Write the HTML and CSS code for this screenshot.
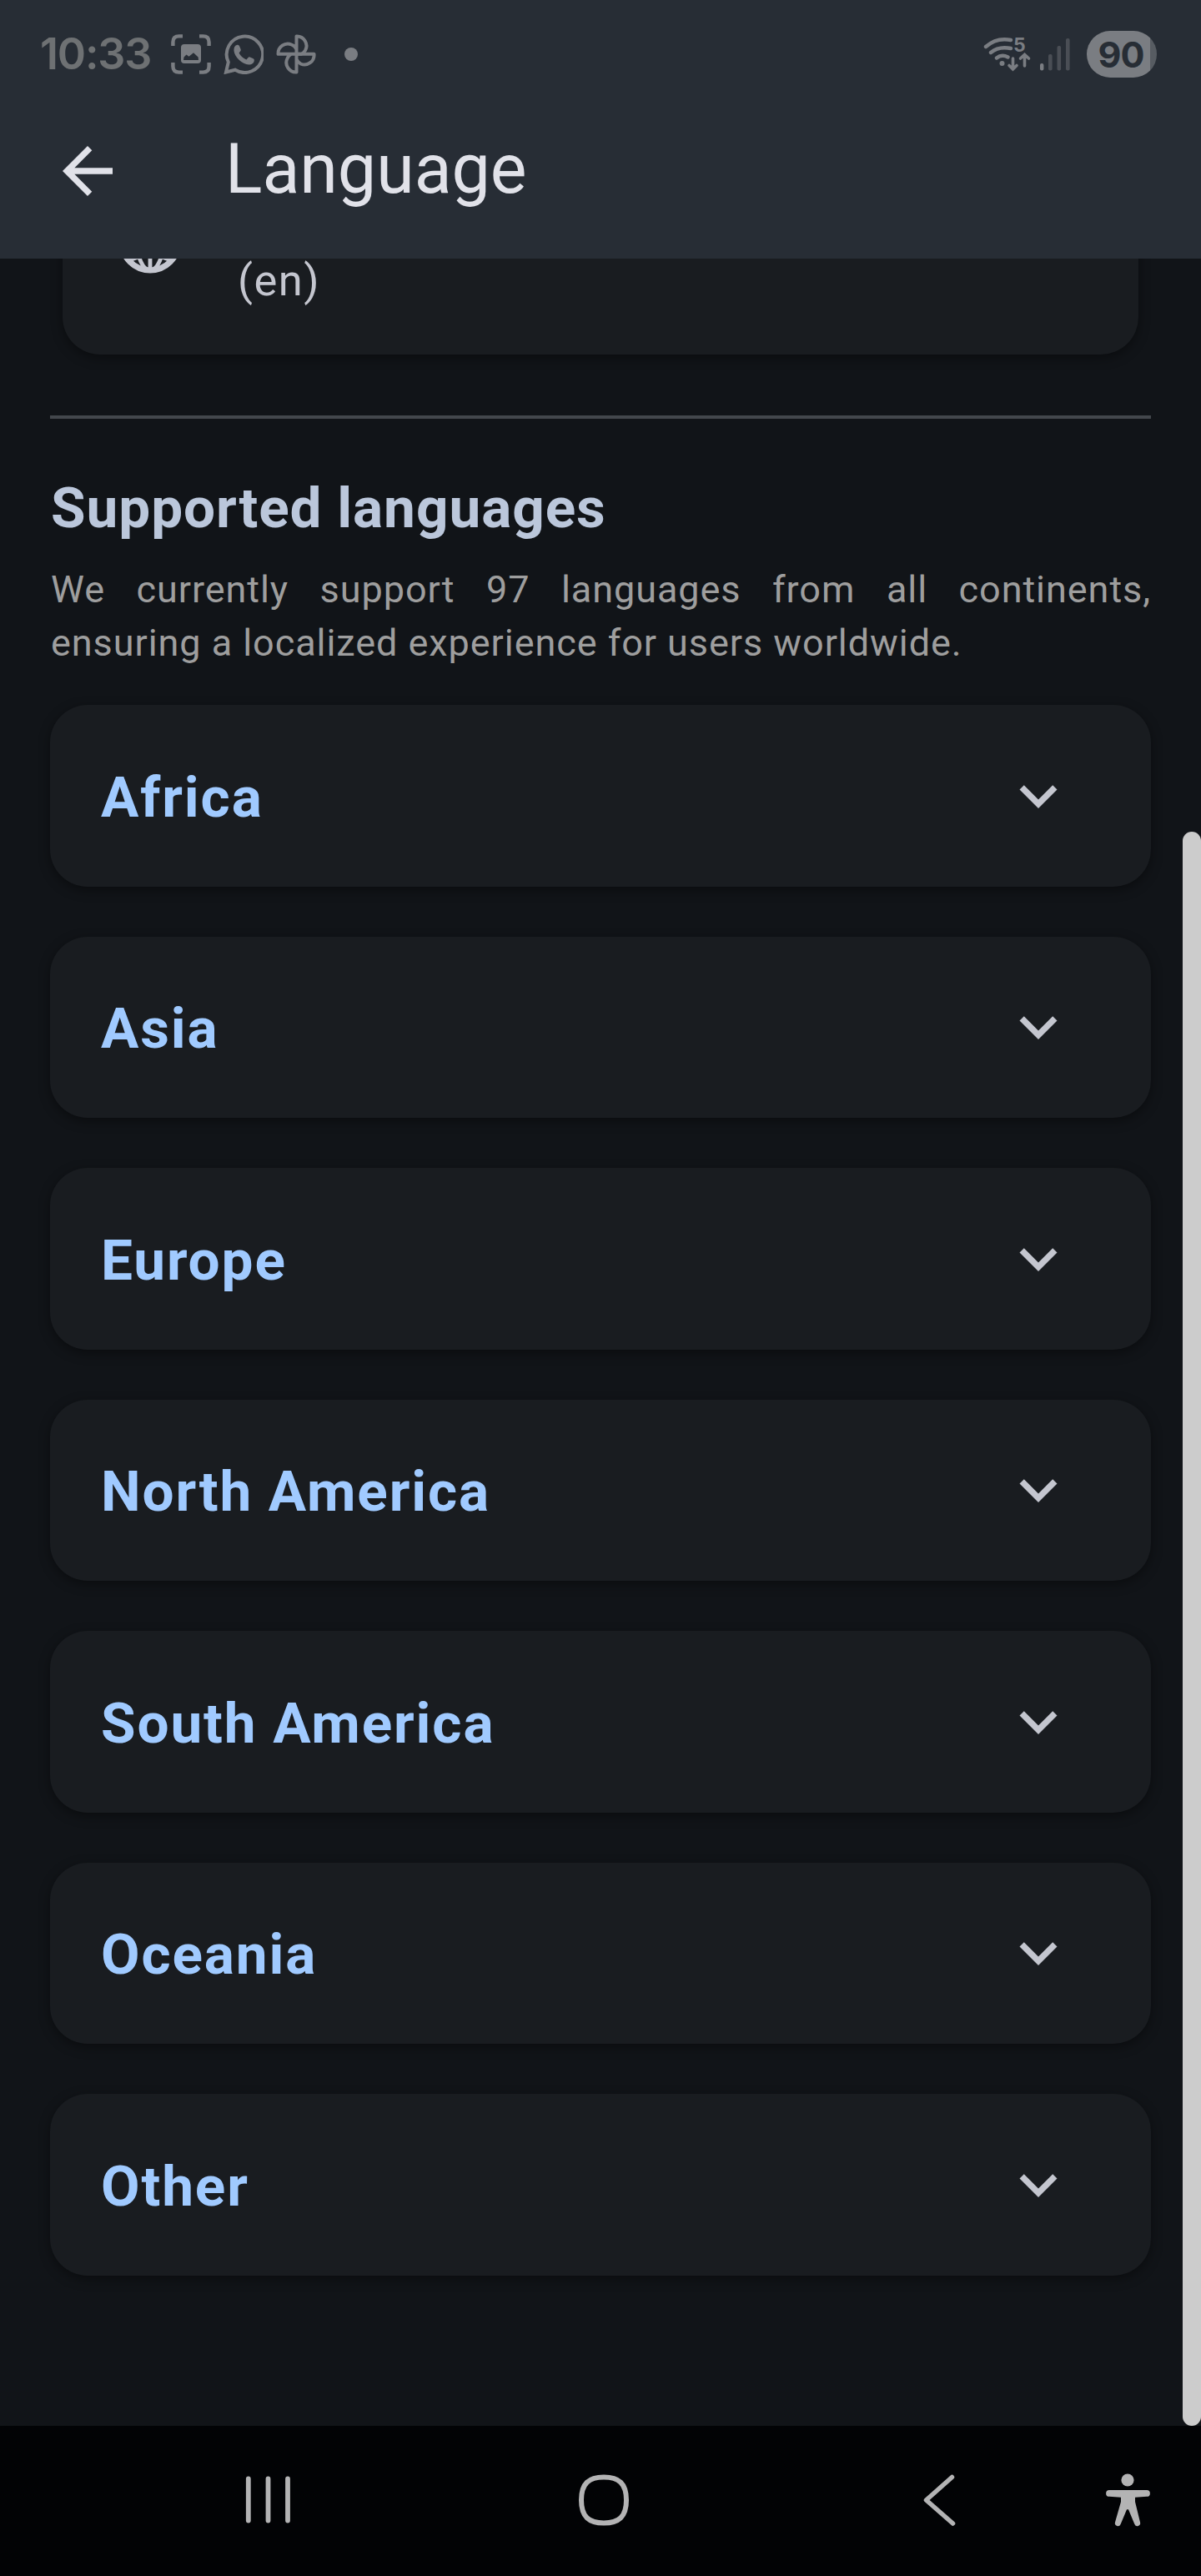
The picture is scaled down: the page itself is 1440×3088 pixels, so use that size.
FILE: index.html
```html
<!DOCTYPE html>
<html lang="en">
<head>
<meta charset="utf-8">
<title>Language</title>
<link rel="stylesheet" href="styles.css">
</head>
<body>
<div class="screen">
  <header class="top">
    <div class="status">
      <span class="clock">10:33</span>
      <div class="notifications">
        <svg width="48" height="48" viewBox="0 0 48 48" fill="none" stroke="currentColor" stroke-width="4.4" stroke-linecap="butt">
          <path d="M2.400 14V9.500Q2.400 2.400 9.500 2.400H14M34 2.400h4.500Q45.600 2.400 45.600 9.500V14M45.600 34v4.500Q45.600 45.600 38.500 45.600H34M14 45.600H9.500Q2.400 45.600 2.400 38.500V34"/>
          <path fill="currentColor" stroke="none" fill-rule="evenodd" d="M16 12h16q4 0 4 4v15q0 4-4 4H16q-4 0-4-4V16q0-4 4-4zM15 31h18l-.4-3.500-5.600-5.300-5.500 4.600-3-2.300-3 3z"/>
        </svg>
        <svg width="48" height="48" viewBox="0 0 48 48" fill="none" stroke="currentColor" stroke-width="4">
          <path d="M3 45.500L5.800 33.500A21.700 21.700 0 1 1 14 42.700z"/>
          <path fill="currentColor" stroke="none" d="M13 15.500q1.500-3 4-2.700 1.600.1 2.200 1.700l1.500 3.800q.4 1.200-.6 2.300l-1.500 1.800q2.800 5.500 8.800 8l2.200-2.500q.9-1 2.100-.5l4 1.900q1.500.8 1.100 2.600-1 4.300-6.300 4.600c-8.500-.3-17.300-9.700-18-16.500q-.1-2.500.5-4.500z"/>
        </svg>
        <svg width="48" height="48" viewBox="0 0 48 48" fill="none" stroke="currentColor" stroke-width="4" stroke-linejoin="round">
          <path d="M24.500 23.800V2.500A11.500 11.500 0 0 1 35 19.500Q33 22.600 30 23.800H2.500A11.500 11.500 0 0 1 18.500 12.500Q22.500 14 24.500 18z"/>
          <path d="M24.500 22V45.500A11.500 11.500 0 0 1 13.500 29Q15 25.500 18 23.800M24.500 23.800H45.500A11.500 11.500 0 0 1 29.500 35.500Q26 33.500 24.500 30"/>
        </svg>
        <span class="more-dot"></span>
      </div>
      <div class="system">
        <svg width="58" height="64" viewBox="0 -10 58 64" fill="none" stroke="currentColor" stroke-width="4.400" stroke-linecap="round">
          <path d="M3 13Q16 1.500 33 5M9 20q9.500-8 24-5M16 26.500q6-5 13.500-1"/>
          <circle cx="22.500" cy="33" r="3" fill="currentColor" stroke="none"/>
          <path stroke-width="3.600" d="M35.500 27v12.500M31 35.500l4.500 4.500 4.500-4.500M49.500 36V23M44.500 27l5-4.500 5 4.500"/>
          <text class="wifi-band" x="36" y="19">5</text>
        </svg>
        <svg width="38" height="40" viewBox="0 0 38 40" fill="currentColor">
          <rect x="1" y="31" width="4.400" height="8.500" rx="2"/>
          <g opacity=".42"><rect x="11" y="20" width="4.600" height="19.500" rx="2"/><rect x="21.500" y="10" width="4.600" height="29.500" rx="2"/><rect x="32" y="1" width="4.600" height="38.500" rx="2"/></g>
        </svg>
        <span class="battery">90</span>
      </div>
    </div>
    <div class="appbar">
      <svg class="material" viewBox="0 0 24 24"><path d="M20 11H7.830l5.590-5.590L12 4l-8 8 8 8 1.410-1.410L7.830 13H20v-2z"/></svg>
      <h1>Language</h1>
    </div>
  </header>

  <main class="content">
    <section class="current">
      <svg class="globe" width="76" height="76" viewBox="-38 -38 76 76" fill="none" stroke="currentColor" stroke-width="4.800">
        <circle r="34" stroke-width="7"/><ellipse rx="15.500" ry="34"/><path d="M0-34V34M-34 0H34M-27-24Q0-7 27-24M-27 24Q0 7 27 24"/>
      </svg>
      <span class="code">(en)</span>
    </section>
    <hr>
    <h2>Supported languages</h2>
    <p>We currently support 97 languages from all continents, ensuring a localized experience for users worldwide.</p>
    <div class="regions">
      <div class="region"><span>Africa</span><svg class="material" viewBox="0 0 24 24"><path d="M16.590 8.590L12 13.170 7.410 8.590 6 10l6 6 6-6z"/></svg></div>
      <div class="region"><span>Asia</span><svg class="material" viewBox="0 0 24 24"><path d="M16.590 8.590L12 13.170 7.410 8.590 6 10l6 6 6-6z"/></svg></div>
      <div class="region"><span>Europe</span><svg class="material" viewBox="0 0 24 24"><path d="M16.590 8.590L12 13.170 7.410 8.590 6 10l6 6 6-6z"/></svg></div>
      <div class="region"><span>North America</span><svg class="material" viewBox="0 0 24 24"><path d="M16.590 8.590L12 13.170 7.410 8.590 6 10l6 6 6-6z"/></svg></div>
      <div class="region"><span>South America</span><svg class="material" viewBox="0 0 24 24"><path d="M16.590 8.590L12 13.170 7.410 8.590 6 10l6 6 6-6z"/></svg></div>
      <div class="region"><span>Oceania</span><svg class="material" viewBox="0 0 24 24"><path d="M16.590 8.590L12 13.170 7.410 8.590 6 10l6 6 6-6z"/></svg></div>
      <div class="region"><span>Other</span><svg class="material" viewBox="0 0 24 24"><path d="M16.590 8.590L12 13.170 7.410 8.590 6 10l6 6 6-6z"/></svg></div>
    </div>
    <div class="scrollbar"></div>
  </main>

  <nav class="navbar">
    <svg width="56" height="60" viewBox="0 0 56 60" fill="none" stroke="currentColor" stroke-width="5.800" stroke-linecap="round"><path d="M4.800 4.500v50M28.500 4.500v50M52 4.500v50"/></svg>
    <svg width="62" height="62" viewBox="0 0 62 62" fill="none" stroke="currentColor" stroke-width="6"><path d="M31 3.500C49 3.500 58 11 58 31S49 58.500 31 58.500 4 51 4 31 13 3.500 31 3.500z"/></svg>
    <svg width="40" height="62" viewBox="0 0 40 62" fill="none" stroke="currentColor" stroke-width="5.500" stroke-linecap="round" stroke-linejoin="round"><path d="M34.500 3.500L3.500 31 35.500 59"/></svg>
    <svg width="54" height="64" viewBox="0 0 54 64" fill="currentColor"><circle cx="27" cy="8" r="7.600"/><path d="M5 20H50a3.900 3.900 0 0 1 0 7.800L36 28.800V34l6 24.500a3.500 3.500 0 0 1-6.800 2L28 43.200h-2L18.800 60.500a3.500 3.500 0 0 1-6.800-2L19 34V28.800L5 27.800A3.900 3.900 0 0 1 5 20z"/></svg>
  </nav>
</div>
</body>
</html>
```
FILE: styles.css
```css
* { box-sizing: border-box; }
body { margin: 0; background: #111418; font-family: Roboto, sans-serif; }
svg { display: block; flex: none; }
.screen { width: 1440px; height: 3088px; display: flex; flex-direction: column; overflow: hidden; }

.top { height: 310px; flex: none; background: #272d35; }
.status { height: 130px; padding: 0 53px 0 48px; display: flex; align-items: center; color: #7a7d82; }
.clock { width: 157px; font: 600 52px/60px Inter, sans-serif; letter-spacing: -1.200px; color: #6e7173; }
.notifications { display: flex; align-items: center; gap: 15px; }
.more-dot { width: 16px; height: 16px; margin-left: 19px; border-radius: 50%; background: currentColor; }
.system { margin-left: auto; display: flex; align-items: center; }
.system svg + svg { margin-left: 9px; }
.wifi-band { font: 700 23px Inter, sans-serif; fill: currentColor; stroke: none; }
.battery { width: 84px; height: 56px; margin-left: 19px; padding-right: 2px; border-radius: 28px; background: linear-gradient(90deg, #7a7d82 90.500%, #575c62 90.500%); color: #272d35; font: 700 43px/57px Inter, sans-serif; letter-spacing: -1px; text-align: center; }
.appbar { height: 150px; padding-left: 60px; display: flex; align-items: center; gap: 120px; color: #e1e2e9; }
.material { width: 90px; height: 90px; fill: currentColor; }
h1 { margin: 0 0 6px; font-size: 82.500px; line-height: 105px; font-weight: 400; }

.content { position: relative; height: 2598px; flex: none; padding: 0 60px; overflow: hidden; }
.current { height: 185px; margin: -70px 15px 0; padding: 12px 67px 0; display: flex; align-items: flex-start; gap: 67px; border-radius: 45px; background: #191c20; color: #c4c6cf; box-shadow: 0 4px 14px rgba(0,0,0,.4); }
.code { margin-top: 60px; font-size: 52.500px; line-height: 48px; letter-spacing: 1.500px; }
hr { height: 4px; margin: 73px 0 0; border: 0; background: #43474c; }
h2 { margin: 68px 0 0 1px; font-size: 67.500px; line-height: 78px; font-weight: 700; letter-spacing: .94px; color: #bbc7db; }
p { margin: 27px 0 0 1px; font-size: 45px; line-height: 64px; letter-spacing: .94px; text-align: justify; color: #9e9e9e; }
.regions { margin-top: 42px; display: grid; gap: 60px; }
.region { height: 217.500px; padding: 0 90px 0 61px; display: flex; align-items: center; justify-content: space-between; border-radius: 45px; background: #191c20; color: #c4c6cf; box-shadow: 0 4px 14px rgba(0,0,0,.4); }
.region span { padding-top: 4px; font-size: 67.500px; line-height: 80px; font-weight: 700; letter-spacing: 1.880px; color: #a0caff; }
.scrollbar { position: absolute; right: 0; top: 687px; width: 22.500px; height: 1911px; border-radius: 11px; background: #ccc; }

.navbar { height: 180px; padding: 0 61px 3px 293px; display: grid; grid-template-columns: 400px 414px 218px 54px; align-items: center; color: #b3b3b4; background: #020305; }
```
